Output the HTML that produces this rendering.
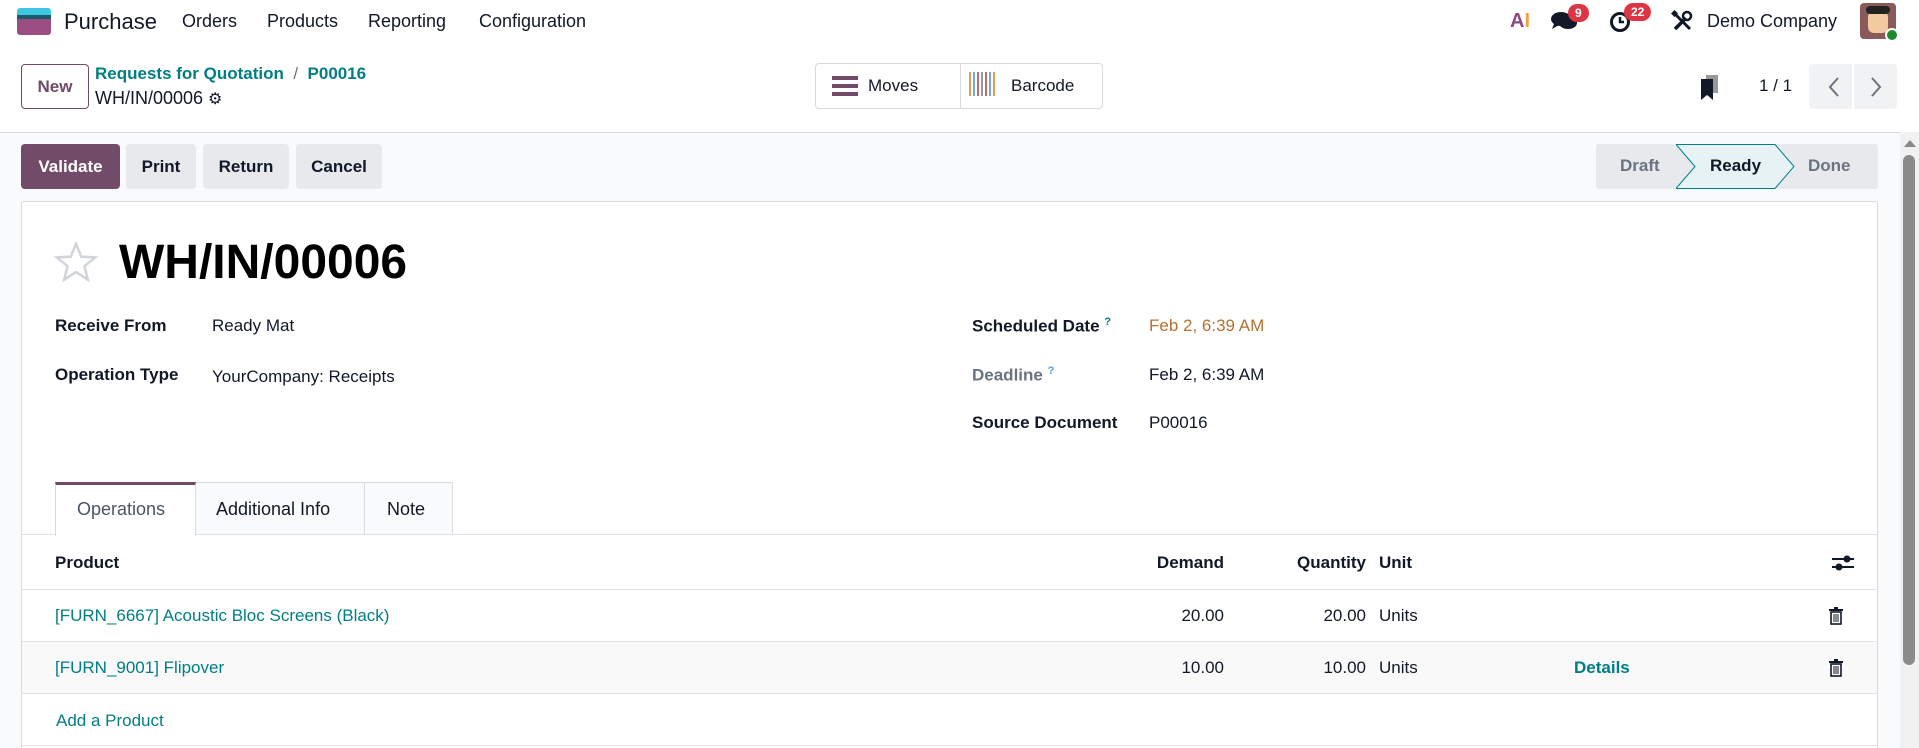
<!DOCTYPE html>
<html><head><meta charset="utf-8"><style>
*{box-sizing:border-box;margin:0;padding:0}
html,body{width:1919px;height:748px;overflow:hidden}
body{background:#fff;font-family:"Liberation Sans",sans-serif;color:#111827;position:relative;font-size:17px}
.a{position:absolute;white-space:nowrap}
.nav{font-size:18px;color:#111827}
.btn{position:absolute;height:45px;border-radius:4px;background:#e7e9ed;font-weight:bold;font-size:17px;display:flex;align-items:center;justify-content:center;color:#111827}
.lbl{font-weight:bold;font-size:17px}
.teal{color:#017e84}
.line{position:absolute;left:21px;width:1857px;height:1px;background:#dee2e6}
</style></head><body>
<div class="a" style="left:17px;top:8px;width:34px;height:27px;border-radius:3px;overflow:hidden">
<div style="height:7px;background:#3fc6e0"></div><div style="height:4px;background:#1a5b6b"></div><div style="height:16px;background:#9b4e82"></div></div>
<div class="a" style="left:64px;top:9px;font-size:22px">Purchase</div>
<div class="a nav" style="left:182px;top:11px">Orders</div>
<div class="a nav" style="left:267px;top:11px">Products</div>
<div class="a nav" style="left:368px;top:11px">Reporting</div>
<div class="a nav" style="left:479px;top:11px">Configuration</div>
<div class="a" style="left:1510px;top:10px;font-weight:bold;font-size:20px;color:#f5a042"><span style="color:#8a4a7e">A</span>I</div>
<svg class="a" style="left:1551px;top:10px" width="28" height="22" viewBox="0 0 28 22"><ellipse cx="10" cy="9" rx="10" ry="7" fill="#111827"/><ellipse cx="17" cy="13" rx="9" ry="6" fill="#111827"/><path d="M3 14 L1 19 L8 15Z" fill="#111827"/></svg>
<div class="a" style="left:1568px;top:4px;background:#dc3545;color:#fff;border-radius:10px;font-size:12px;font-weight:bold;padding:2px 7px">9</div>
<svg class="a" style="left:1609px;top:11px" width="22" height="22" viewBox="0 0 22 22"><circle cx="11" cy="11" r="8.5" fill="none" stroke="#111827" stroke-width="3"/><path d="M11 6V11H15" stroke="#111827" stroke-width="2.5" fill="none"/></svg>
<div class="a" style="left:1624px;top:3px;background:#dc3545;color:#fff;border-radius:10px;font-size:12px;font-weight:bold;padding:2px 7px">22</div>
<svg class="a" style="left:1671px;top:10px" width="22" height="22" viewBox="0 0 22 22"><path d="M4 19L15 8" stroke="#111827" stroke-width="3.5"/><circle cx="16" cy="6" r="4" fill="none" stroke="#111827" stroke-width="2.5"/><path d="M3 3L19 19" stroke="#111827" stroke-width="3"/><rect x="1" y="1" width="5" height="5" fill="#111827" transform="rotate(45 3.5 3.5)"/></svg>
<div class="a" style="left:1707px;top:11px;font-size:18px">Demo Company</div>
<div class="a" style="left:1860px;top:3px;width:36px;height:36px;border-radius:4px;background:#8a5a5a"><div style="position:absolute;left:8px;top:8px;width:20px;height:22px;background:#f2c9a0;border-radius:6px"></div><div style="position:absolute;left:6px;top:3px;width:24px;height:8px;background:#222;border-radius:4px"></div><div style="position:absolute;right:-3px;bottom:-3px;width:14px;height:14px;border-radius:50%;background:#1e8a2e;border:2px solid #fff"></div></div>
<div class="a" style="left:21px;top:64px;width:68px;height:45px;border:1px solid #714b67;border-radius:4px;display:flex;align-items:center;justify-content:center;font-weight:bold;color:#714b67;font-size:17px">New</div>
<div class="a teal" style="left:95px;top:64px;font-weight:bold;font-size:17px">Requests for Quotation <span style="color:#6b7280;font-weight:normal">&nbsp;/&nbsp;</span> P00016</div>
<div class="a" style="left:95px;top:88px;font-size:18px">WH/IN/00006 <span style="font-size:16px">⚙</span></div>
<div class="a" style="left:815px;top:63px;width:288px;height:46px;border:1px solid #d8dadd;border-radius:4px"></div>
<div class="a" style="left:960px;top:64px;width:1px;height:44px;background:#d8dadd"></div>
<svg class="a" style="left:832px;top:75px" width="26" height="22"><rect y="1" width="26" height="4" fill="#714b67"/><rect y="9" width="26" height="4" fill="#714b67"/><rect y="17" width="26" height="4" fill="#714b67"/></svg>
<div class="a" style="left:868px;top:76px;font-size:17px">Moves</div>
<svg class="a" style="left:968px;top:72px" width="30" height="24"><g stroke-width="2"><line x1="2" y1="0" x2="2" y2="24" stroke="#e0a050"/><line x1="6" y1="0" x2="6" y2="24" stroke="#7aa8d8"/><line x1="10" y1="0" x2="10" y2="24" stroke="#c07070"/><line x1="14" y1="0" x2="14" y2="24" stroke="#999"/><line x1="18" y1="0" x2="18" y2="24" stroke="#c07070"/><line x1="22" y1="0" x2="22" y2="24" stroke="#7aa8d8"/><line x1="26" y1="0" x2="26" y2="24" stroke="#e0a050"/></g></svg>
<div class="a" style="left:1011px;top:76px;font-size:17px">Barcode</div>
<svg class="a" style="left:1700px;top:75px" width="20" height="26"><rect x="6" y="0" width="12" height="18" fill="#999"/><path d="M1 4H13V25L7 20L1 25Z" fill="#111827"/></svg>
<div class="a" style="left:1759px;top:76px;font-size:17px">1 / 1</div>
<div class="a" style="left:1809px;top:64px;width:88px;height:45px;background:#f1f2f4;border-radius:4px"></div>
<div class="a" style="left:1852px;top:64px;width:2px;height:45px;background:#fff"></div>
<svg class="a" style="left:1825px;top:76px" width="60" height="22"><path d="M13 2L5 11L13 20" stroke="#6b7280" stroke-width="2" fill="none"/><path d="M47 2L55 11L47 20" stroke="#6b7280" stroke-width="2" fill="none"/></svg>
<div class="a" style="left:0;top:132px;width:1919px;height:616px;background:#f9fafb;border-top:1px solid #d8dadd"></div>
<div class="btn" style="left:21px;top:144px;width:99px;background:#714b67;color:#fff">Validate</div>
<div class="btn" style="left:126px;top:144px;width:70px">Print</div>
<div class="btn" style="left:203px;top:144px;width:86px">Return</div>
<div class="btn" style="left:296px;top:144px;width:86px">Cancel</div>
<div class="a" style="left:1596px;top:144px;width:282px;height:45px;background:#e7e9ed;border-radius:3px"></div>
<svg class="a" style="left:1676px;top:144px" width="120" height="45"><path d="M0 0.5H99L118 22.5L99 44.5H0L19 22.5Z" fill="#e6f2f3" stroke="#017e84" stroke-width="1"/></svg>
<div class="a" style="left:1620px;top:156px;font-weight:bold;color:#6b7280">Draft</div>
<div class="a" style="left:1710px;top:156px;font-weight:bold">Ready</div>
<div class="a" style="left:1808px;top:156px;font-weight:bold;color:#6b7280">Done</div>
<div class="a" style="left:1900px;top:132px;width:19px;height:616px;background:#f1f1f1"></div>
<svg class="a" style="left:1903px;top:138px" width="14" height="10"><path d="M1 9L7 2L13 9Z" fill="#888"/></svg>
<div class="a" style="left:1903px;top:155px;width:12px;height:510px;background:#8a8a8a;border-radius:6px"></div>
<div class="a" style="left:21px;top:201px;width:1857px;height:547px;background:#fff;border:1px solid #d8dadd;border-bottom:none;border-radius:3px 3px 0 0"></div>
<svg class="a" style="left:54px;top:241px" width="44" height="42" viewBox="0 0 24 23"><path d="M12 1.5L14.9 8.6L22.5 9L16.6 13.8L18.5 21.2L12 17L5.5 21.2L7.4 13.8L1.5 9L9.1 8.6Z" fill="none" stroke="#d1d5db" stroke-width="1.4"/></svg>
<div class="a" style="left:119px;top:235px;font-size:48px;font-weight:bold;color:#000">WH/IN/00006</div>
<div class="a lbl" style="left:55px;top:316px">Receive From</div>
<div class="a" style="left:212px;top:316px">Ready Mat</div>
<div class="a lbl" style="left:55px;top:365px">Operation Type</div>
<div class="a" style="left:212px;top:367px">YourCompany: Receipts</div>
<div class="a lbl" style="left:972px;top:316px">Scheduled Date <sup style="color:#017e84;font-size:11px">?</sup></div>
<div class="a" style="left:1149px;top:316px;color:#b5722e">Feb 2, 6:39 AM</div>
<div class="a lbl" style="left:972px;top:365px;color:#6b7280">Deadline <sup style="color:#4aa3d8;font-size:11px">?</sup></div>
<div class="a" style="left:1149px;top:365px">Feb 2, 6:39 AM</div>
<div class="a lbl" style="left:972px;top:413px">Source Document</div>
<div class="a" style="left:1149px;top:413px">P00016</div>
<div class="a" style="left:195px;top:482px;width:258px;height:53px;background:#f9fafb;border:1px solid #d8dadd;border-bottom:none"></div>
<div class="a" style="left:364px;top:482px;width:1px;height:52px;background:#d8dadd"></div>
<div class="a" style="left:55px;top:482px;width:141px;height:54px;background:#fff;border-top:3px solid #714b67;border-left:1px solid #d8dadd;border-right:1px solid #d8dadd"></div>
<div class="line" style="top:534px;left:21px;width:34px"></div>
<div class="line" style="top:534px;left:196px;width:1682px"></div>
<div class="a" style="left:77px;top:499px;color:#4b5563;font-size:18px">Operations</div>
<div class="a" style="left:216px;top:499px;font-size:18px">Additional Info</div>
<div class="a" style="left:387px;top:499px;font-size:18px">Note</div>
<div class="a lbl" style="left:55px;top:553px">Product</div>
<div class="a lbl" style="left:1124px;top:553px;width:100px;text-align:right">Demand</div>
<div class="a lbl" style="left:1250px;top:553px;width:116px;text-align:right">Quantity</div>
<div class="a lbl" style="left:1379px;top:553px">Unit</div>
<svg class="a" style="left:1832px;top:553px" width="22" height="20"><line x1="0" y1="6" x2="22" y2="6" stroke="#111827" stroke-width="2"/><line x1="0" y1="14" x2="22" y2="14" stroke="#111827" stroke-width="2"/><circle cx="15" cy="6" r="3.5" fill="#111827"/><circle cx="7" cy="14" r="3.5" fill="#111827"/></svg>
<div class="line" style="top:589px"></div>
<div class="a teal" style="left:55px;top:606px">[FURN_6667] Acoustic Bloc Screens (Black)</div>
<div class="a" style="left:1124px;top:606px;width:100px;text-align:right">20.00</div>
<div class="a" style="left:1250px;top:606px;width:116px;text-align:right">20.00</div>
<div class="a" style="left:1379px;top:606px">Units</div>
<svg class="a" style="left:1829px;top:607px" width="14" height="18"><rect x="0" y="2" width="14" height="2" fill="#111827"/><rect x="5" y="0" width="4" height="3" fill="#111827"/><rect x="2" y="5" width="10" height="12" fill="none" stroke="#111827" stroke-width="1.6"/><path d="M5 7V15M7 7V15M9 7V15" stroke="#111827" stroke-width="1"/></svg>
<div class="line" style="top:641px"></div>
<div class="a" style="left:22px;top:642px;width:1855px;height:51px;background:#f9f9f9"></div>
<div class="a teal" style="left:55px;top:658px">[FURN_9001] Flipover</div>
<div class="a" style="left:1124px;top:658px;width:100px;text-align:right">10.00</div>
<div class="a" style="left:1250px;top:658px;width:116px;text-align:right">10.00</div>
<div class="a" style="left:1379px;top:658px">Units</div>
<div class="a teal" style="left:1574px;top:658px;font-weight:bold">Details</div>
<svg class="a" style="left:1829px;top:659px" width="14" height="18"><rect x="0" y="2" width="14" height="2" fill="#111827"/><rect x="5" y="0" width="4" height="3" fill="#111827"/><rect x="2" y="5" width="10" height="12" fill="none" stroke="#111827" stroke-width="1.6"/><path d="M5 7V15M7 7V15M9 7V15" stroke="#111827" stroke-width="1"/></svg>
<div class="line" style="top:693px"></div>
<div class="a teal" style="left:56px;top:711px">Add a Product</div>
<div class="line" style="top:745px"></div>
</body></html>
